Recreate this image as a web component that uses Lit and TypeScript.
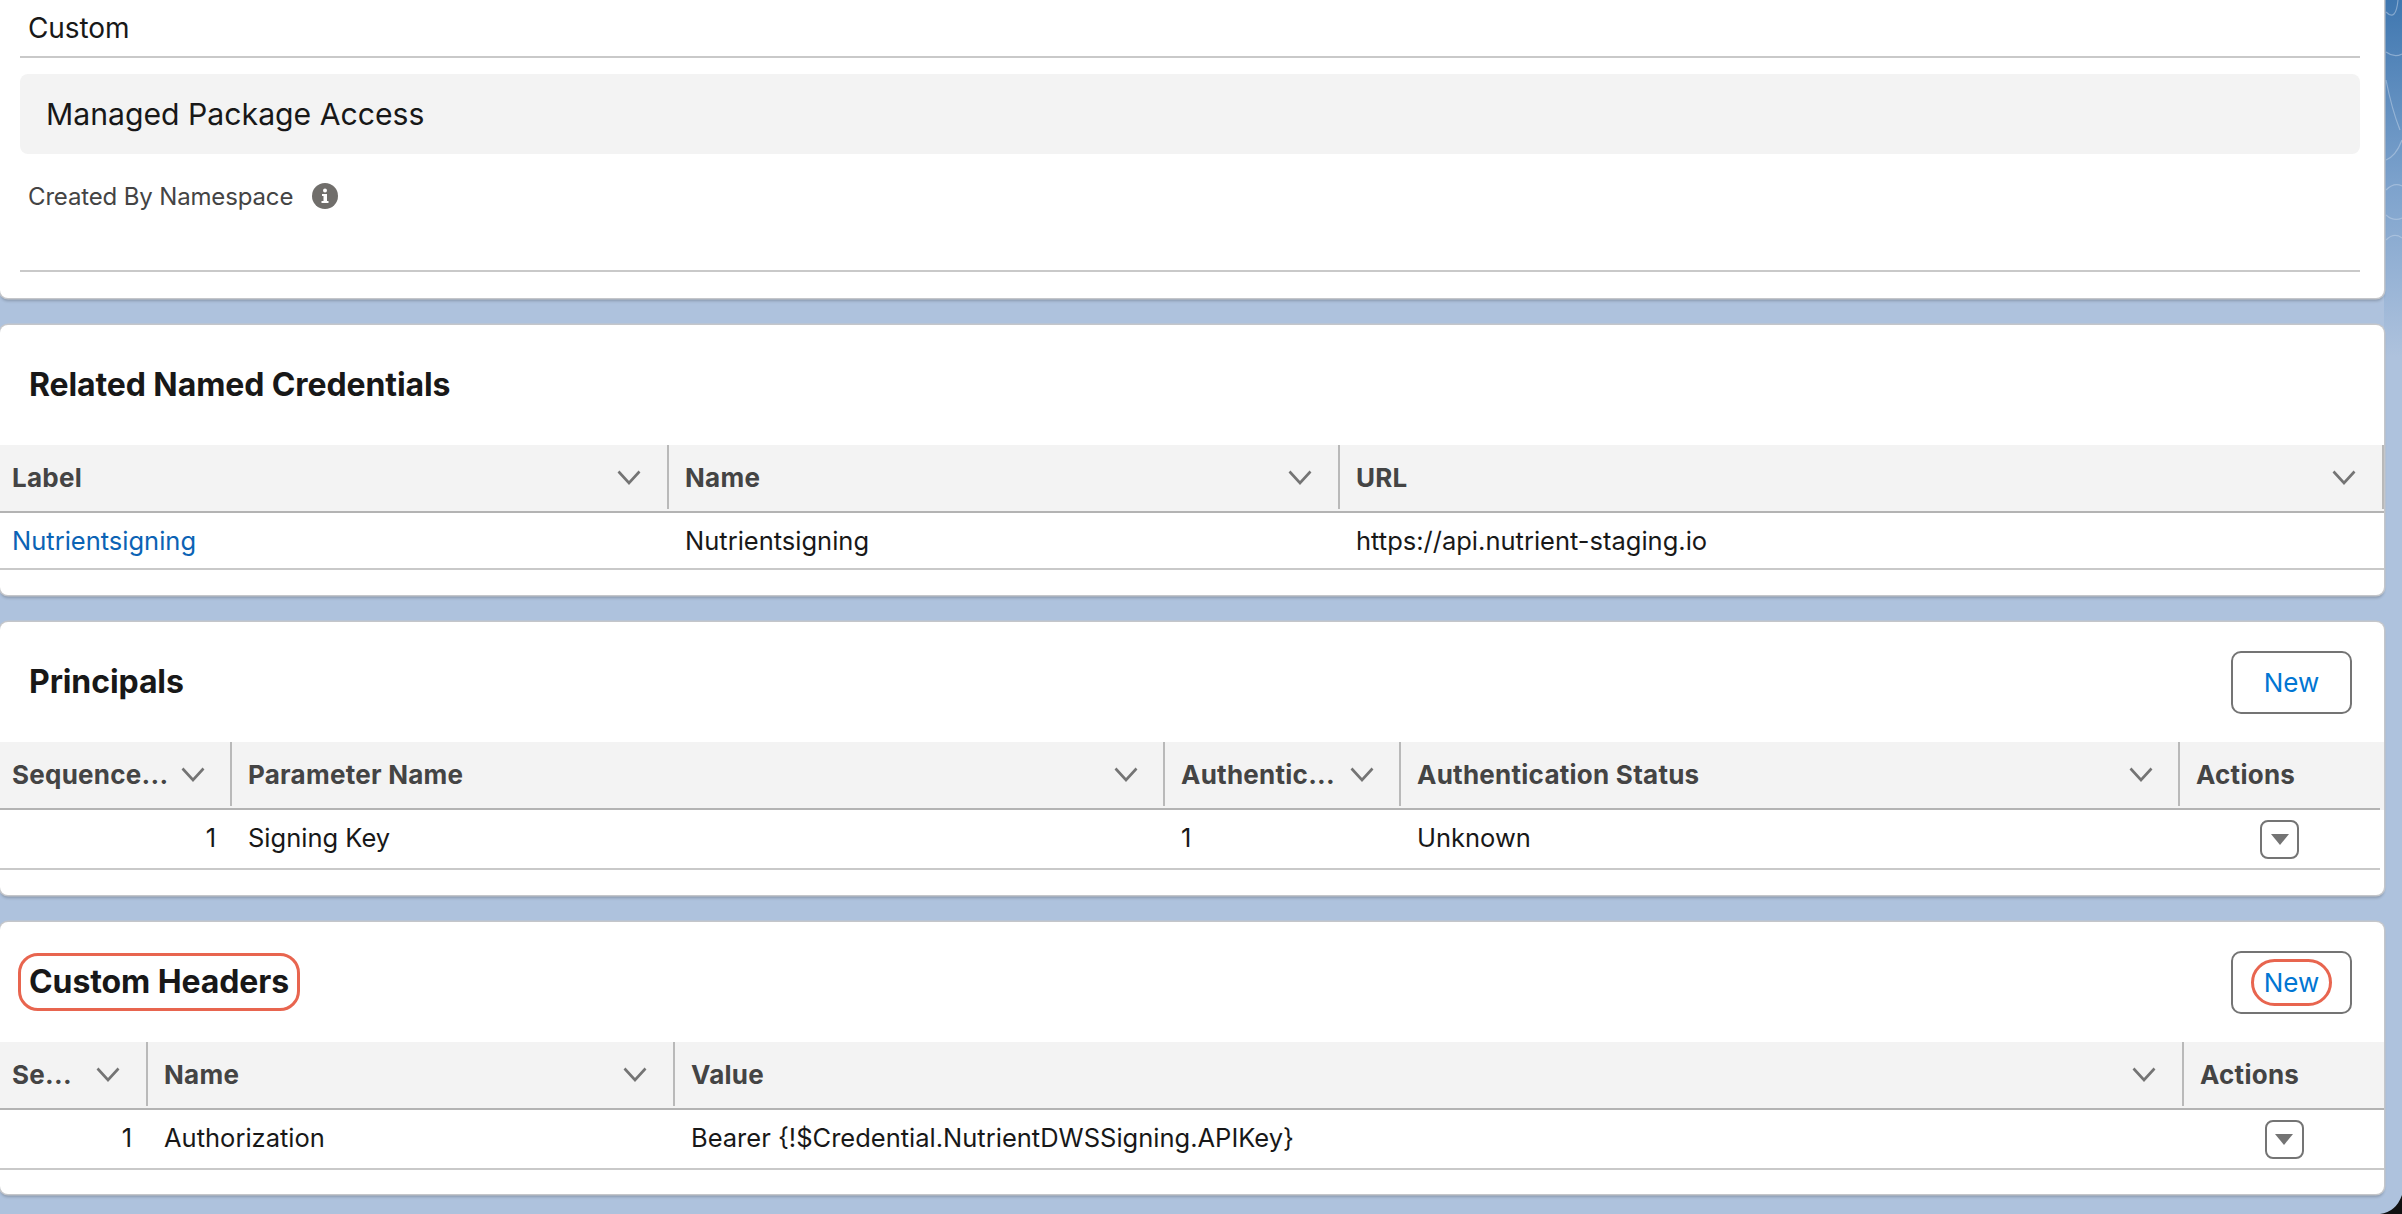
import { LitElement, css, html, nothing } from 'lit';
import { customElement } from 'lit/decorators.js';

interface Column {
  label: string;
  width: number;
  menu?: boolean;
}

interface Section {
  title: string;
  columns: Column[];
  cells: unknown[];
  hasNew?: boolean;
  marked?: boolean;
  inset?: boolean;
}

const chevron = html`<svg class="chevron" viewBox="0 0 24 15" width="24" height="15">
  <path d="M1.5 1.5 L12 13 L22.5 1.5" fill="none" stroke="#747474" stroke-width="2.6" />
</svg>`;

const rowMenu = html`<span class="row-menu">
  <svg viewBox="0 0 18 11" width="18" height="11"><path d="M0 0 H18 L9 11 Z" fill="#747474" /></svg>
</span>`;

const link = html`<a class="link">Nutrientsigning</a>`;

const SECTIONS: Section[] = [
  {
    title: 'Related Named Credentials',
    columns: [
      { label: 'Label', width: 669, menu: true },
      { label: 'Name', width: 671, menu: true },
      { label: 'URL', width: 1044, menu: true },
    ],
    cells: [link, 'Nutrientsigning', 'https://api.nutrient-staging.io'],
  },
  {
    title: 'Principals',
    hasNew: true,
    inset: true,
    columns: [
      { label: 'Sequence...', width: 232, menu: true },
      { label: 'Parameter Name', width: 933, menu: true },
      { label: 'Authentic...', width: 236, menu: true },
      { label: 'Authentication Status', width: 779, menu: true },
      { label: 'Actions', width: 204 },
    ],
    cells: ['1', 'Signing Key', '1', 'Unknown', rowMenu],
  },
  {
    title: 'Custom Headers',
    hasNew: true,
    marked: true,
    columns: [
      { label: 'Se...', width: 148, menu: true },
      { label: 'Name', width: 527, menu: true },
      { label: 'Value', width: 1509, menu: true },
      { label: 'Actions', width: 200 },
    ],
    cells: ['1', 'Authorization', 'Bearer {!$Credential.NutrientDWSSigning.APIKey}', rowMenu],
  },
];

@customElement('app-root')
export class AppRoot extends LitElement {
  static styles = css`
    :host {
      display: block;
      position: relative;
      width: 2402px;
      height: 1214px;
      overflow: hidden;
      background: #aec2dd;
      font-family: Inter, 'Liberation Sans', sans-serif;
      color: #181818;
    }

    .wallpaper {
      position: absolute;
      top: 0;
      right: 0;
    }

    .corner {
      position: absolute;
      right: 0;
      bottom: 0;
    }

    .page {
      position: relative;
      display: flex;
      flex-direction: column;
      gap: 27px;
      width: 2384px;
    }

    .card {
      background: #fff;
      border-radius: 8px;
      box-shadow: 0 0 0 1.5px #c4c6ca, 0 3px 3px rgb(0 0 0 / 0.22);
    }

    .details {
      height: 298px;
      padding: 0 24px 0 20px;
      border-radius: 0 0 8px 8px;
      box-sizing: border-box;
    }

    .type {
      height: 56px;
      padding-left: 8px;
      border-bottom: 2px solid #c9c9c9;
      font-size: 28px;
      letter-spacing: -0.1px;
      line-height: 56px;
    }

    .band {
      margin-top: 16px;
      height: 80px;
      padding-left: 26px;
      border-radius: 8px;
      background: #f3f3f3;
      font-size: 30.2px;
      line-height: 80px;
    }

    .field {
      display: flex;
      align-items: center;
      gap: 19px;
      height: 118px;
      padding: 0 0 32px 8px;
      border-bottom: 2px solid #c9c9c9;
      box-sizing: border-box;
      font-size: 24px;
      letter-spacing: -0.15px;
      color: #444;
    }

    .section-head {
      display: flex;
      justify-content: space-between;
      align-items: center;
      height: 120px;
      padding: 0 32px 0 29px;
      box-sizing: border-box;
    }

    h2 {
      margin: 0;
      font-size: 32px;
      letter-spacing: -0.1px;
      line-height: 38px;
      font-weight: 700;
    }

    .marked {
      margin-left: -11px;
      padding: 7px 8px;
      border: 3px solid #e8654f;
      border-radius: 20px;
    }

    .new {
      display: flex;
      align-items: center;
      justify-content: center;
      width: 121px;
      height: 63px;
      border: 2px solid #747474;
      border-radius: 10px;
      box-sizing: border-box;
      font-size: 26px;
      color: #0176d3;
    }

    .new.marked-new span {
      padding: 5px 10px;
      border: 3px solid #e8654f;
      border-radius: 24px;
    }

    .thead {
      background: #f3f3f3;
    }

    .cols {
      display: grid;
      align-items: center;
    }

    .th {
      display: flex;
      align-items: center;
      justify-content: space-between;
      height: 64px;
      padding: 0 26px 0 16px;
      box-sizing: border-box;
      font-size: 26px;
      letter-spacing: 0.25px;
      font-weight: 700;
      color: #444;
      white-space: nowrap;
    }

    .th:first-child {
      padding-left: 12px;
    }

    .th.has-menu {
      border-right: 2px solid #b9b9b9;
    }

    .inset .th {
      padding-right: 25px;
    }

    .rule {
      margin-top: 2px;
      height: 2px;
      background: #b3b3b3;
    }

    .row-rule {
      height: 2px;
      background: #c9c9c9;
    }

    .inset .rule,
    .inset .row-rule {
      margin-right: 4px;
    }

    .td {
      display: flex;
      align-items: center;
      height: 55px;
      padding-left: 16px;
      padding-bottom: 1px;
      box-sizing: border-box;
      font-size: 25.5px;
      white-space: nowrap;
    }

    .with-action .td {
      height: 58px;
      padding-bottom: 3px;
    }

    .td:first-child {
      padding-left: 12px;
    }

    .td.number {
      justify-content: flex-end;
      padding-right: 16px;
    }

    .with-action .td.action {
      justify-content: center;
      padding-left: 0;
      padding-bottom: 0;
    }

    .inset .td.action {
      padding-right: 5px;
    }

    .link {
      color: #0b63b5;
    }

    .row-menu {
      display: flex;
      align-items: center;
      justify-content: center;
      width: 39px;
      height: 39px;
      border: 2px solid #747474;
      border-radius: 8px;
      box-sizing: border-box;
    }

    .foot {
      height: 24px;
    }

    .inset .foot,
    .plain .foot {
      height: 25px;
    }
  `;

  private renderTable(section: Section) {
    const template = section.columns.map((c) => `${c.width}px`).join(' ');
    const withAction = section.cells.includes(rowMenu);
    return html`
      <div class=${section.inset ? 'inset' : withAction ? '' : 'plain'}>
        <div class="thead">
          <div class="cols" style="grid-template-columns:${template}">
            ${section.columns.map(
              (c) => html`<div class="th ${c.menu ? 'has-menu' : ''}">
                <span>${c.label}</span>${c.menu ? chevron : nothing}
              </div>`,
            )}
          </div>
          <div class="rule"></div>
        </div>
        <div class="cols ${withAction ? 'with-action' : ''}" style="grid-template-columns:${template}">
          ${section.cells.map((cell, i) => {
            let kind = '';
            if (cell === '1' && i === 0) kind = 'number';
            if (cell === rowMenu) kind = 'action';
            return html`<div class="td ${kind}">${cell}</div>`;
          })}
        </div>
        <div class="row-rule"></div>
        <div class="foot"></div>
      </div>
    `;
  }

  private renderSection(section: Section) {
    return html`
      <section class="card">
        <div class="section-head">
          <h2 class=${section.marked ? 'marked' : ''}>${section.title}</h2>
          ${section.hasNew
            ? html`<div class="new ${section.marked ? 'marked-new' : ''}"><span>New</span></div>`
            : nothing}
        </div>
        ${this.renderTable(section)}
      </section>
    `;
  }

  protected render() {
    return html`
      <svg class="wallpaper" width="18" height="420" viewBox="0 0 18 420">
        <defs>
          <linearGradient id="sky" x1="0" y1="0" x2="0" y2="1">
            <stop offset="0" stop-color="#3f77b0" />
            <stop offset="0.45" stop-color="#7ea3cd" />
            <stop offset="0.85" stop-color="#aec2dd" />
          </linearGradient>
        </defs>
        <rect width="18" height="420" fill="url(#sky)" />
        <g fill="none" stroke="#c6d6ea" stroke-opacity="0.5" stroke-width="1.2">
          <path d="M2 12 Q12 22 14 0" />
          <path d="M2 52 Q10 58 18 54" />
          <path d="M2 80 Q8 110 16 130" />
          <path d="M2 160 Q12 156 18 140" />
          <path d="M2 190 Q10 182 18 186" />
          <path d="M2 215 Q10 222 18 218" />
          <path d="M2 240 Q10 232 18 238" />
        </g>
      </svg>
      <svg class="corner" width="22" height="19" viewBox="0 0 22 19">
        <path d="M22 0 V19 H0 Q16 17 22 0 Z" fill="#111" />
      </svg>
      <div class="page">
        <section class="card details">
          <div class="type">Custom</div>
          <div class="band">Managed Package Access</div>
          <div class="field">
            <span>Created By Namespace</span>
            <svg viewBox="0 0 26 26" width="26" height="26">
              <circle cx="13" cy="13" r="13" fill="#706e6b" />
              <circle cx="13" cy="7.6" r="2" fill="#fff" />
              <path d="M10 11 H15 V18 H16.5 V20 H9.5 V18 H11.5 V13 H10 Z" fill="#fff" />
            </svg>
          </div>
        </section>
        ${SECTIONS.map((s) => this.renderSection(s))}
      </div>
    `;
  }
}
